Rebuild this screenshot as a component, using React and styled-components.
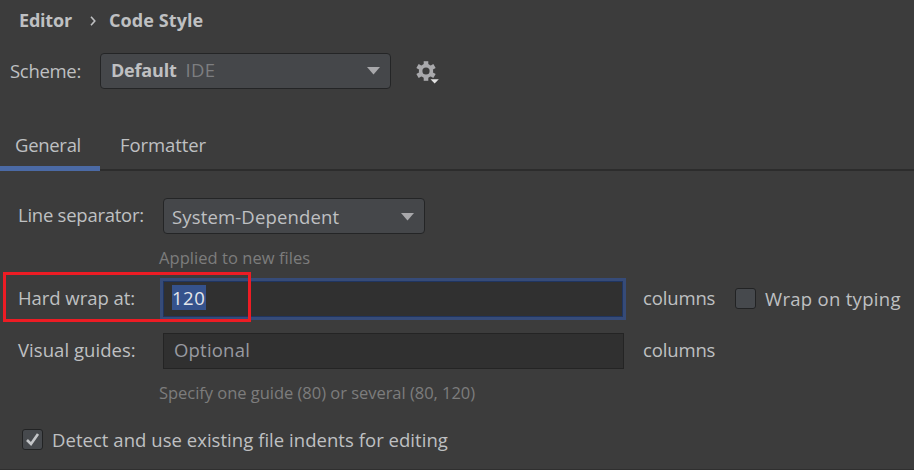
import React from 'react';
import styled, { createGlobalStyle } from 'styled-components';

const GlobalStyle = createGlobalStyle`
  * { box-sizing: border-box; }
  body { margin: 0; background: #3c3c3c; }
`;

const Page = styled.main`
  position: relative;
  width: 914px;
  height: 470px;
  overflow: hidden;
  background: #3c3c3c;
  border-bottom: 1px solid #2f2f2f;
  color: #bfc0c2;
  font: 18.5px/26px "Open Sans", "Noto Sans", sans-serif;
  white-space: nowrap;
`;

const Text = styled.span`
  letter-spacing: ${(p) => p.$track || 0}px;
  padding-bottom: ${(p) => p.$raise || 0}px;
  padding-top: ${(p) => p.$lower || 0}px;
`;

const Strong = styled(Text)`
  font-size: 18px;
  font-weight: 700;
`;

const Muted = styled(Text)`
  color: #7d7e80;
`;

const Breadcrumb = styled.nav`
  display: flex;
  align-items: center;
  height: 41px;
  padding-left: 19px;
`;

const Chevron = styled.svg`
  width: 6px;
  height: 10px;
  margin: 1px 13px 0 18px;
`;

const SchemeRow = styled.div`
  display: flex;
  align-items: center;
  height: 59px;
  padding-left: 10px;
`;

const SchemeLabel = styled.div`
  flex: 0 0 90px;
`;

const Combo = styled.div`
  display: flex;
  align-items: center;
  gap: 9px;
  flex: 0 0 ${(p) => p.$width}px;
  height: 36px;
  padding: 0 10px 0 ${(p) => p.$inset}px;
  border: 1px solid #242526;
  border-radius: 4px;
  background: #45474a;
`;

const Arrow = styled.svg`
  width: 13px;
  height: 8px;
  margin: 1px 0 0 auto;
`;

const GearButton = styled.svg`
  width: 24px;
  height: 25px;
  margin: 6px 0 0 25px;
`;

const Tabs = styled.div`
  display: flex;
  height: 71px;
  box-shadow: inset 0 -2px #2c2c2c;
`;

const Tab = styled.div`
  padding: 32px 0 0 ${(p) => (p.$active ? 15 : 20)}px;
  width: ${(p) => (p.$active ? 100 : 120)}px;
  border-bottom: ${(p) => (p.$active ? '5px solid #4b6aa5' : '0')};
`;

const Form = styled.div`
  padding: 27px 0 0 18px;
`;

const Row = styled.div`
  display: flex;
  align-items: center;
  height: ${(p) => p.$height}px;
  margin-top: ${(p) => p.$gap || 0}px;
`;

const Label = styled.label`
  flex: 0 0 145px;
  display: flex;
`;

const Field = styled.div`
  display: flex;
  align-items: center;
  flex: 0 0 461px;
  height: 36px;
  padding-left: 10px;
  border: 1px solid #242424;
  background: #303030;
  color: #989aa0;
`;

const FocusedField = styled(Field)`
  flex-basis: 460px;
  margin-right: 1px;
  padding-left: 8px;
  border-color: #203560;
  box-shadow: 0 0 0 3px #364b78;
`;

const Selection = styled.span`
  height: 25px;
  width: 34px;
  margin-bottom: 2px;
  background: #35528c;
  color: #e4e6ea;
  line-height: 25px;
  letter-spacing: 0.5px;
`;

const Unit = styled.div`
  display: flex;
  flex: 0 0 92px;
  margin-left: 19px;
`;

const Hint = styled.div`
  height: ${(p) => p.$height}px;
  padding: 11px 0 0 141px;
  color: #7d7d7d;
  font-size: 16.5px;
  letter-spacing: ${(p) => p.$track || 0}px;
`;

const Box = styled.span`
  display: grid;
  place-items: center;
  flex: 0 0 21px;
  height: 21px;
  margin-right: 9px;
  border: 1px solid #222324;
  border-radius: 3px;
  background: #46494d;
`;

const CheckRow = styled(Row)`
  padding-left: 4px;
`;

const Highlight = styled.div`
  position: absolute;
  left: 3px;
  top: 272px;
  width: 248px;
  height: 50px;
  border: 3px solid #ed1c24;
`;

const DropArrow = () => (
  <Arrow viewBox="0 0 13 8"><path d="M0 0h13L6.5 7.5z" fill="#a8a8ab" /></Arrow>
);

const Gear = () => (
  <GearButton viewBox="0 0 24 25">
    <g fill="#a9a9ac" transform="translate(10 10)">
      <path fillRule="evenodd" d="M0-7.2a7.2 7.2 0 1 0 0 14.4a7.2 7.2 0 1 0 0-14.4M0-3.6a3.6 3.6 0 1 1 0 7.2a3.6 3.6 0 1 1 0-7.2" />
      {[0, 60, 120, 180, 240, 300].map((a) => (
        <path key={a} d="M-2.3-9.8h4.6v4h-4.6z" transform={`rotate(${a})`} />
      ))}
    </g>
    <path d="M13 17h11v2l-5 5h-2l-4-4z" fill="#3c3c3c" />
    <path d="M14.5 18.2h8.3l-4.15 4.2z" fill="#e2e2e2" />
  </GearButton>
);

export default function App() {
  return (
    <Page>
      <GlobalStyle />
      <Breadcrumb>
        <Strong $track={-0.2} $raise={1}>Editor</Strong>
        <Chevron viewBox="0 0 6 10"><path d="M1 .8L4.8 5L1 9.2" fill="none" stroke="#bfc0c2" strokeWidth="1.6" /></Chevron>
        <Strong $track={0.1} $raise={1}>Code Style</Strong>
      </Breadcrumb>
      <SchemeRow>
        <SchemeLabel><Text $track={-0.3}>Scheme:</Text></SchemeLabel>
        <Combo $width={291} $inset={10}>
          <Strong $track={-0.2} $raise={2}>Default</Strong>
          <Muted $track={0.3} $raise={2}>IDE</Muted>
          <DropArrow />
        </Combo>
        <Gear />
      </SchemeRow>
      <Tabs>
        <Tab $active><Text $track={-0.3}>General</Text></Tab>
        <Tab><Text $track={-0.1}>Formatter</Text></Tab>
      </Tabs>
      <Form>
        <Row $height={36}>
          <Label><Text $track={-0.25} $raise={2}>Line separator:</Text></Label>
          <Combo $width={262} $inset={8}>
            <Text $track={0.15} $lower={2}>System-Dependent</Text>
            <DropArrow />
          </Combo>
        </Row>
        <Hint $height={44} $track={0.05}>Applied to new files</Hint>
        <Row $height={41}>
          <Label><Text $track={-0.05} $raise={2}>Hard wrap at:</Text></Label>
          <FocusedField><Selection>120</Selection></FocusedField>
          <Unit><Text $track={-0.15} $raise={2}>columns</Text></Unit>
          <Box />
          <Text $track={0.3}>Wrap on typing</Text>
        </Row>
        <Row $height={36} $gap={14}>
          <Label><Text $track={0.05} $raise={2}>Visual guides:</Text></Label>
          <Field><Text $track={0.2} $raise={2}>Optional</Text></Field>
          <Unit><Text $track={-0.15} $raise={2}>columns</Text></Unit>
        </Row>
        <Hint $height={43} $track={-0.03}>Specify one guide (80) or several (80, 120)</Hint>
        <CheckRow $height={21} $gap={17}>
          <Box>
            <svg width="15" height="15" viewBox="0 0 15 15"><path d="M2 8l4 4L13 2" fill="none" stroke="#c3c5c8" strokeWidth="2.6" /></svg>
          </Box>
          <Text $track={0.04}>Detect and use existing file indents for editing</Text>
        </CheckRow>
      </Form>
      <Highlight />
    </Page>
  );
}
